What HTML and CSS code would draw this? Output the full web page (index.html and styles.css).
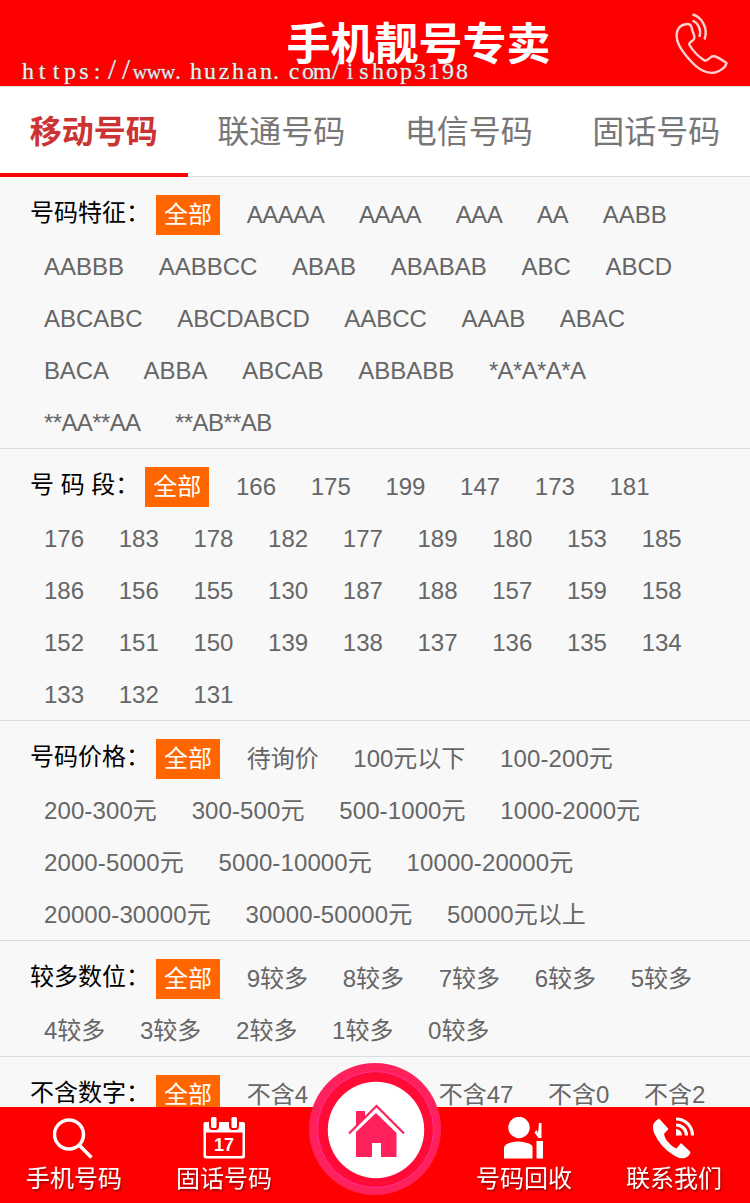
FILE: index.html
```html
<!DOCTYPE html>
<html lang="zh-CN">
<head>
<meta charset="utf-8">
<title>手机靓号专卖</title>
<link rel="stylesheet" href="styles.css">
</head>
<body>
<header class="header">
  <h1 class="title">手机靓号专卖</h1>
  <svg class="call" viewBox="0 0 56 64" fill="none" stroke="#ffd0d0" stroke-width="2.400" stroke-linejoin="round">
    <path d="M13 12C16 11.500 17.500 14 18 17C18.500 21 21.500 23 20 27C18.500 30 14 30 15.500 33C19 39 25 45 30.500 48.500C34 49.500 36 44 39.500 44C43 44.500 48 48 52.500 51C52 55 47 59 41 60.500C36 61.500 31 60 27.500 58C20 54 9 41 5 33C2.500 28 2 23 3.500 18.500C5 14.500 9 12.500 13 12Z"/>
    <path d="M18.500 2.500C26 4 35 15 30.500 27.500M18.500 8.500C24.500 11 27.500 18 25.500 25"/>
  </svg>
  <svg class="watermark" viewBox="0 0 450 34">
    <text y="25" x="7 21 35 49 63 76 91 105 119 133 147 157 175 189 203 217 231 245 255 273 287 301 315 329 343 357 371 385 399 413 427 441">https:<tspan class="slash">//</tspan><tspan class="wide">www</tspan>.huzhan.com<tspan class="slash">/</tspan>ishop3198</text>
  </svg>
</header>
<nav class="tabs">
  <a class="tab active">移动号码</a>
  <a class="tab">联通号码</a>
  <a class="tab">电信号码</a>
  <a class="tab">固话号码</a>
</nav>
<main>
  <section class="filter">
    <span class="label">号码特征：</span><a class="chip on">全部</a>
    <a class="chip narrow">AAAAA</a><a class="chip narrow">AAAA</a><a class="chip narrow">AAA</a><a class="chip narrow">AA</a><a class="chip">AABB</a>
    <a class="chip">AABBB</a><a class="chip">AABBCC</a><a class="chip">ABAB</a><a class="chip">ABABAB</a><a class="chip">ABC</a><a class="chip">ABCD</a>
    <a class="chip">ABCABC</a><a class="chip snug">ABCDABCD</a><a class="chip">AABCC</a><a class="chip snug">AAAB</a><a class="chip">ABAC</a>
    <a class="chip snug">BACA</a><a class="chip">ABBA</a><a class="chip">ABCAB</a><a class="chip">ABBABB</a><a class="chip star">*A*A*A*A</a>
    <a class="chip star">**AA**AA</a><a class="chip star">**AB**AB</a>
  </section>
  <section class="filter">
    <span class="label">号 码 段：</span><a class="chip on">全部</a>
    <a class="chip">166</a><a class="chip">175</a><a class="chip">199</a><a class="chip">147</a><a class="chip">173</a><a class="chip">181</a>
    <a class="chip">176</a><a class="chip">183</a><a class="chip">178</a><a class="chip">182</a><a class="chip">177</a><a class="chip">189</a><a class="chip">180</a><a class="chip">153</a><a class="chip">185</a>
    <a class="chip">186</a><a class="chip">156</a><a class="chip">155</a><a class="chip">130</a><a class="chip">187</a><a class="chip">188</a><a class="chip">157</a><a class="chip">159</a><a class="chip">158</a>
    <a class="chip">152</a><a class="chip">151</a><a class="chip">150</a><a class="chip">139</a><a class="chip">138</a><a class="chip">137</a><a class="chip">136</a><a class="chip">135</a><a class="chip">134</a>
    <a class="chip">133</a><a class="chip">132</a><a class="chip">131</a>
  </section>
  <section class="filter">
    <span class="label">号码价格：</span><a class="chip on">全部</a>
    <a class="chip">待询价</a><a class="chip">100元以下</a><a class="chip range">100-200元</a>
    <a class="chip range">200-300元</a><a class="chip range">300-500元</a><a class="chip range">500-1000元</a><a class="chip range">1000-2000元</a>
    <a class="chip range">2000-5000元</a><a class="chip range">5000-10000元</a><a class="chip range">10000-20000元</a>
    <a class="chip range">20000-30000元</a><a class="chip range">30000-50000元</a><a class="chip">50000元以上</a>
  </section>
  <section class="filter">
    <span class="label">较多数位：</span><a class="chip on">全部</a>
    <a class="chip">9较多</a><a class="chip">8较多</a><a class="chip">7较多</a><a class="chip">6较多</a><a class="chip">5较多</a>
    <a class="chip">4较多</a><a class="chip">3较多</a><a class="chip">2较多</a><a class="chip">1较多</a><a class="chip">0较多</a>
  </section>
  <section class="filter">
    <span class="label">不含数字：</span><a class="chip on">全部</a>
    <a class="chip">不含4</a><a class="chip hidden">不含7</a><a class="chip">不含47</a><a class="chip">不含0</a><a class="chip">不含2</a>
  </section>
</main>
<footer class="bar">
  <a class="item">
    <svg class="icon" viewBox="0 0 42 42" fill="none" stroke="#fff"><circle cx="16" cy="17.500" r="14.500" stroke-width="3.500"/><path d="M26.500 28.500L38.500 40.500" stroke-width="3.600"/></svg>
    <span>手机号码</span>
  </a>
  <a class="item">
    <svg class="icon" viewBox="0 0 42 42"><path fill="#fff" fill-rule="evenodd" d="M2 5H6V9Q6 13 9 13H13Q16 13 16 9V5H26V9Q26 13 29 13H33Q36 13 36 9V5H40Q42 5 42 7V39Q42 41.500 40 41.500H3Q0.500 41.500 0.500 39V7Q0.500 5 2 5ZM3 15.500V37.500Q3 39 4.500 39H38Q39.500 39 39.500 37.500V15.500Z"/><rect x="8" y="0" width="5.500" height="11" rx="1.500" fill="#fff"/><rect x="28.500" y="0" width="5.500" height="11" rx="1.500" fill="#fff"/><text class="date" x="21" y="33.500">17</text></svg>
    <span>固话号码</span>
  </a>
  <a class="item home">
    <svg class="badge" viewBox="0 0 132 132">
      <circle cx="66" cy="66" r="66" fill="#ff215c"/><circle cx="66.500" cy="66.500" r="58" fill="#ff0b36" stroke="#ff2f9a"/><circle cx="67" cy="67" r="48.200" fill="#fff"/>
      <path fill="#ff215c" d="M47 69L67 50L87.500 70V94H72V80H63V94H47ZM47 48H56V54L47 63Z"/>
      <path fill="none" stroke="#ff215c" stroke-width="2.200" d="M40 70.500L67.500 43L95 70.500"/>
    </svg>
  </a>
  <a class="item">
    <svg class="icon" viewBox="0 0 42 42" fill="#fff"><circle cx="16" cy="10.500" r="10.700"/><path d="M1 41.500V31Q1 27 8 25.500Q15 23.700 22 25.500Q29.500 27 29.500 30V41.500ZM33.500 24H40V41.500H33.500ZM36 6H38.500V21H35.500L31.500 15.500L33.500 13L35 16Z"/></svg>
    <span>号码回收</span>
  </a>
  <a class="item">
    <svg class="icon" viewBox="0 0 42 42"><path fill="#fff" d="M6 1.500L15.500 12L11 17Q12 23 18 28Q21 31 23.500 31.500L28 26L37.500 35Q37 38 34 40Q28 43 21 38.500Q8 31 1 16Q-1 9 1 6Q3 3 6 1.500Z"/><g fill="none" stroke="#fff" stroke-width="3.200"><path d="M23 2C32 2 39.500 9 39.500 18.500M23 8C29 8 33.500 12.500 33.500 18.500"/></g><path fill="#fff" d="M23 12Q29 13 29 18.500H23Z"/></svg>
    <span>联系我们</span>
  </a>
</footer>
</body>
</html>
```
FILE: styles.css
```css
* { box-sizing: border-box; }
body {
  margin: 0;
  height: 1203px;
  overflow: hidden;
  background: #f8f8f8;
  font-family: "Liberation Sans", "Noto Sans CJK SC", sans-serif;
  font-size: 24px;
  color: #000;
}
.header {
  position: relative;
  display: flex;
  justify-content: center;
  height: 87px;
  padding-left: 87px;
  background: #f00;
  border-bottom: 1px solid #ddd;
}
.title {
  margin: 0;
  font-family: "Noto Sans CJK SC", sans-serif;
  font-size: 44px;
  font-weight: 700;
  line-height: 82px;
  color: #fff;
}
.call {
  position: absolute;
  top: 12px;
  right: 20px;
  width: 56px;
  height: 64px;
}
.watermark {
  position: absolute;
  left: 21px;
  top: 54px;
  width: 450px;
  height: 34px;
  font-family: "Liberation Serif", serif;
  font-size: 24px;
  text-anchor: middle;
  fill: #eee;
  stroke: #777;
  stroke-width: 0.7px;
  paint-order: stroke;
}
.wide { font-size: 20px; }
.slash { font-size: 29px; }
.tabs {
  display: grid;
  grid-template-columns: repeat(4, 1fr);
  height: 90px;
  background: #fff;
  box-shadow: inset 0 -1px #ddd;
}
.tab {
  height: 90px;
  font-family: "Noto Sans CJK SC", sans-serif;
  font-size: 32px;
  line-height: 85px;
  text-align: center;
  color: #777;
}
.tab.active {
  font-weight: 700;
  color: #c33;
  border-bottom: 4px solid #f00;
}
.filter {
  display: flex;
  flex-wrap: wrap;
  padding: 12px 20px 0 30px;
  box-shadow: inset 0 -1px #ddd;
}
.label {
  line-height: 36px;
  margin-top: 6px;
  white-space: nowrap;
}
.chip {
  height: 40px;
  margin: 6px 12.67px 6px 6px;
  padding: 0 8px;
  line-height: 40px;
  white-space: nowrap;
  color: #666;
}
.narrow { letter-spacing: -0.48px; }
.snug { letter-spacing: -0.14px; }
.star { letter-spacing: -0.62px; }
.range { letter-spacing: 0.11px; }
.on {
  background: #f60;
  color: #fff;
}
.hidden { visibility: hidden; }
.bar {
  position: fixed;
  left: 0;
  right: 0;
  bottom: 0;
  display: grid;
  grid-template-columns: repeat(5, 1fr);
  height: 96px;
  background: #f00;
}
.item {
  display: flex;
  flex-direction: column;
  align-items: center;
  padding: 10px 2px 0 0;
  line-height: 40px;
  color: #fff;
  text-shadow: 1px 2px 2px rgba(0, 0, 0, 0.4);
}
.icon {
  flex: none;
  width: 42px;
  height: 42px;
}
.date {
  font-size: 18px;
  font-weight: 700;
  text-anchor: middle;
  text-shadow: none;
  fill: #fff;
}
.home {
  padding: 0;
  margin-top: -44px;
}
.badge {
  flex: none;
  width: 132px;
  height: 132px;
}
```
